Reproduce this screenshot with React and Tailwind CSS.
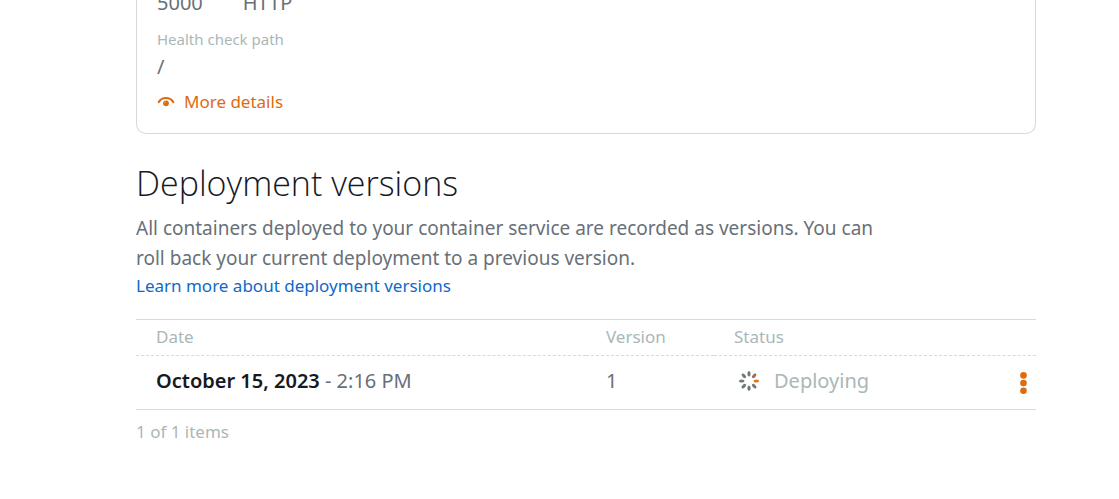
import React from "react";

const spokes = [
  { angle: 0, color: "#6d7b7c" },
  { angle: 45, color: "#96705a" },
  { angle: 90, color: "#ec7211" },
  { angle: 135, color: "#6d7b7c" },
  { angle: 180, color: "#6d7b7c" },
  { angle: 225, color: "#6d7b7c" },
  { angle: 270, color: "#6d7b7c" },
  { angle: 315, color: "#6d7b7c" },
];

function EyeIcon() {
  return (
    <svg width="18" height="12" viewBox="0 0 18 12" fill="none" aria-hidden="true">
      <path d="M1.800 6C3.400 3.200 5.800 2 9 2s5.600 1.200 7.200 4" stroke="#dd6b10" strokeWidth="2.200" strokeLinecap="round" />
      <circle cx="9" cy="7.300" r="2.900" fill="#dd6b10" />
      <circle cx="8" cy="6.300" r="0.600" fill="#f6c9a2" />
    </svg>
  );
}

function Spinner() {
  return (
    <svg width="22" height="22" viewBox="0 0 22 22" aria-hidden="true">
      {spokes.map((s) => (
        <ellipse key={s.angle} cx="11" cy="3.700" rx="1.600" ry="2.800" fill={s.color} transform={`rotate(${s.angle} 11 11)`} />
      ))}
    </svg>
  );
}

function DotsIcon() {
  return (
    <svg width="8" height="24" viewBox="0 0 8 24" fill="#dd6b10" aria-hidden="true">
      <circle cx="3.500" cy="4.400" r="3.300" />
      <circle cx="3.500" cy="12.100" r="3.300" />
      <circle cx="3.500" cy="19.800" r="3.300" />
    </svg>
  );
}

function EndpointCard() {
  return (
    <section className="overflow-hidden rounded-b-[10px] border border-t-0 border-[#d5dbdb] px-5 pb-[17px]">
      <div className="-mt-[13px] flex gap-10 text-xl leading-8">
        <span>5000</span>
        <span>HTTP</span>
      </div>
      <dl className="mt-2">
        <dt className="text-[15px] leading-6 text-[#aab7b8]">Health check path</dt>
        <dd className="text-xl leading-8">/</dd>
      </dl>
      <button type="button" className="mt-[5px] flex items-center gap-[9px] text-[17px] leading-7 text-[#dd6b10]">
        <EyeIcon />
        More details
      </button>
    </section>
  );
}

function VersionsTable() {
  return (
    <table className="mt-5 w-full table-fixed border-collapse border-y border-[#d5dbdb] text-left">
      <thead>
        <tr className="h-9 border-b border-dashed border-[#d5dbdb] text-[17px] leading-6 text-[#aab7b8]">
          <th scope="col" className="w-1/2 pb-[2px] pl-5 font-normal">Date</th>
          <th scope="col" className="w-32 pb-[2px] pl-5 font-normal">Version</th>
          <th scope="col" className="pb-[2px] pl-5 font-normal">Status</th>
          <td className="w-[74px]"></td>
        </tr>
      </thead>
      <tbody>
        <tr className="h-[54px] text-xl">
          <td className="pb-1 pl-5">
            <strong className="font-semibold text-[#16191f]">October 15, 2023</strong> - 2:16 PM
          </td>
          <td className="pb-1 pl-5">1</td>
          <td className="pb-1 pl-5 text-[#aab7b8]">
            <div className="flex items-center gap-[14px] pl-1">
              <Spinner />
              Deploying
            </div>
          </td>
          <td className="pr-2">
            <button type="button" aria-label="Version actions" className="ml-auto block">
              <DotsIcon />
            </button>
          </td>
        </tr>
      </tbody>
    </table>
  );
}

export default function App() {
  return (
    <main className="min-h-screen bg-white pr-[83px] pb-6 pl-[136px] font-['Noto_Sans',sans-serif] text-[#687078]">
      <EndpointCard />
      <section className="pt-6">
        <h2 className="font-['Open_Sans',sans-serif] text-[34px] leading-[50px] font-light text-[#16191f]">Deployment versions</h2>
        <p className="mt-[5px] max-w-[760px] text-[19px] leading-[30px]">
          All containers deployed to your container service are recorded as versions. You can roll back your current deployment to a previous version.
        </p>
        <a href="#versions" className="block text-[17px] leading-[26px] text-[#0f69c9]">Learn more about deployment versions</a>
        <VersionsTable />
        <p className="mt-2 text-[17px] leading-7 text-[#aab7b8]">1 of 1 items</p>
      </section>
    </main>
  );
}
